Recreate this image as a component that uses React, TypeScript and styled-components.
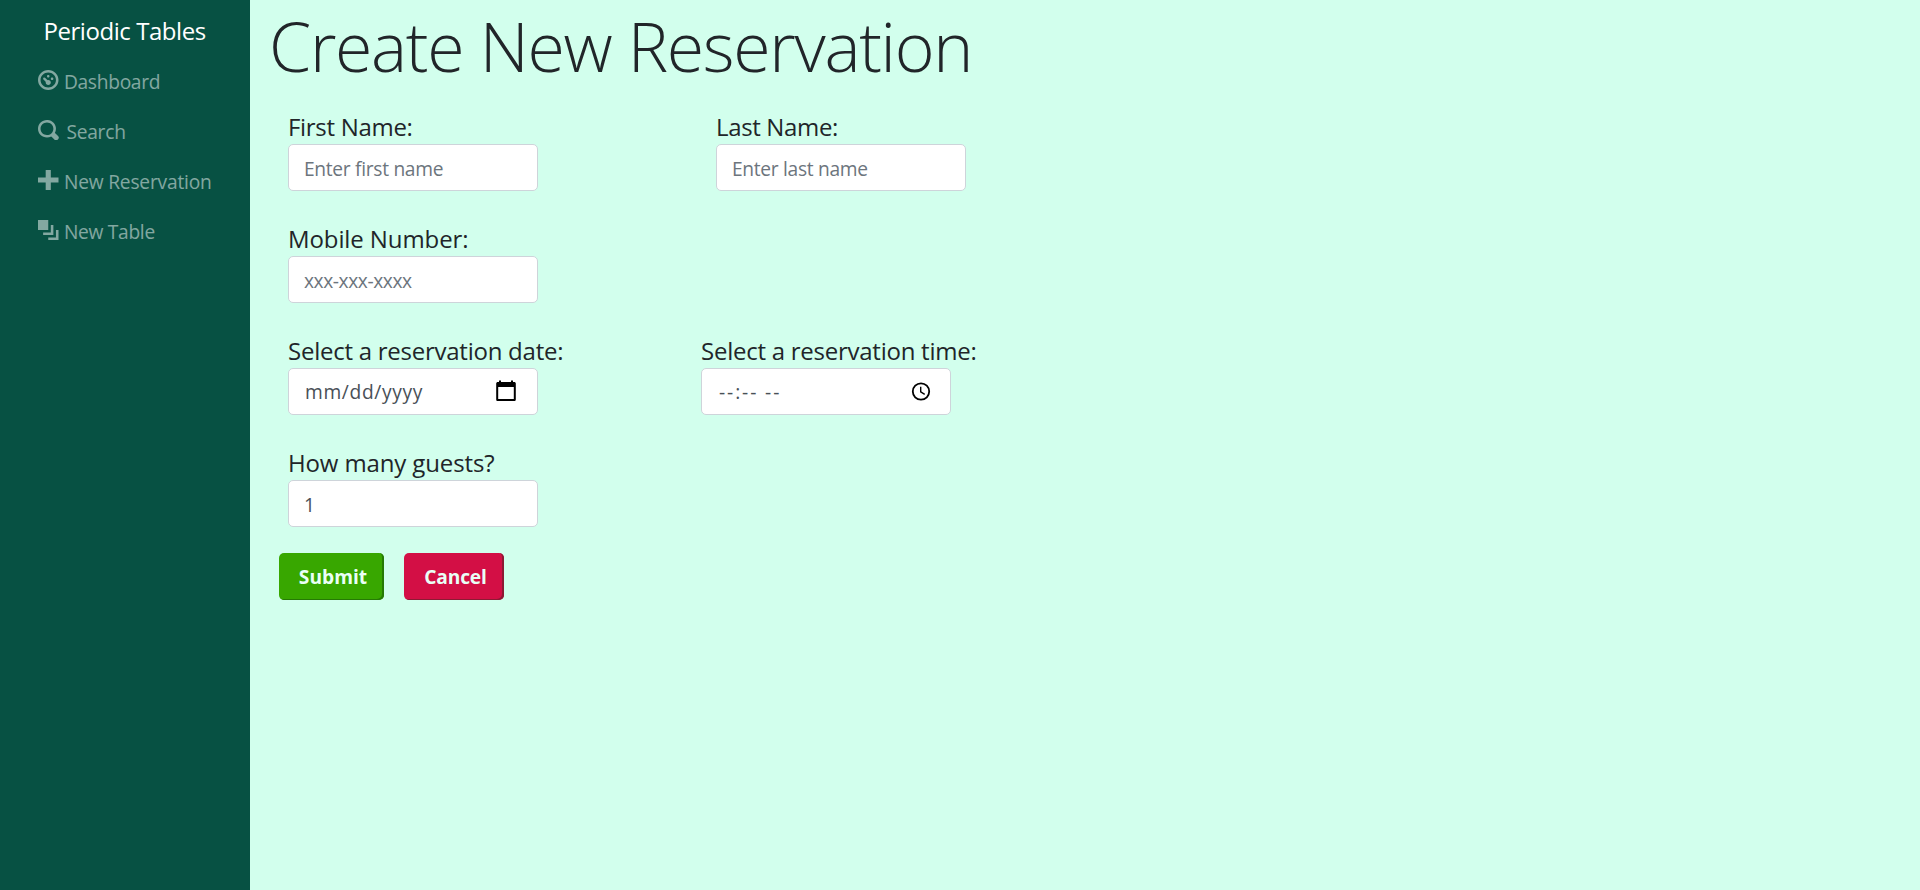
import React from "react";
import styled, { createGlobalStyle } from "styled-components";

const GlobalStyle = createGlobalStyle`
  *, *::before, *::after { box-sizing: border-box; }
  body {
    margin: 0;
    background: #d2ffed;
    color: #212529;
    font-family: "Open Sans", "Noto Sans", sans-serif;
  }
`;

const Layout = styled.div`
  display: flex;
  min-height: 100vh;
`;

const Sidebar = styled.nav`
  flex: 0 0 250px;
  background: #075143;
`;

const Brand = styled.div`
  height: 57px;
  padding: 9px 0 0 43.5px;
  color: #fff;
  font-size: 24px;
  line-height: 44px;
  letter-spacing: -0.45px;
  white-space: nowrap;
`;

const NavList = styled.ul`
  margin: 0;
  padding: 0 0 0 38.4px;
  list-style: none;
`;

const NavItem = styled.li<{ $gap?: number; $tracking: number }>`
  display: flex;
  align-items: center;
  gap: ${(p) => p.$gap ?? 5}px;
  height: 50px;
  color: rgba(255, 255, 255, 0.5);
  font-size: 19.2px;
  letter-spacing: ${(p) => p.$tracking}px;
  white-space: nowrap;
`;

const NavIcon = styled.svg`
  width: 20.5px;
  height: 20px;
  margin-bottom: 4px;
  fill: currentColor;
`;

const NavLabel = styled.span`
  margin-bottom: 2px;
`;

const Main = styled.main`
  flex: 1;
  padding-left: 20px;
`;

const Title = styled.h1`
  height: 107px;
  margin: 0 0 0 -1px;
  font-size: 68px;
  font-weight: 300;
  line-height: 92px;
  letter-spacing: -1.3px;
  white-space: nowrap;
`;

const Row = styled.div`
  display: flex;
  height: 112px;
  padding-left: 18px;
`;

const Field = styled.div<{ $width?: number }>`
  width: ${(p) => p.$width ?? 414}px;
`;

const Label = styled.label<{ $tracking?: number }>`
  display: block;
  height: 37px;
  font-size: 24px;
  line-height: 40px;
  letter-spacing: ${(p) => p.$tracking ?? 0}px;
  white-space: nowrap;
`;

const Control = styled.div`
  display: flex;
  align-items: center;
  width: 250px;
  height: 47px;
  padding: 0 15px;
  background: #fff;
  border: 1px solid #ced4da;
  border-radius: 5px;
`;

const Input = styled.input<{ $tracking?: number; $inset?: number }>`
  flex: 1;
  min-width: 0;
  height: 30px;
  margin-top: 2px;
  padding: 0 0 0 ${(p) => p.$inset ?? 0}px;
  background: transparent;
  border: 0;
  outline: 0;
  color: #495057;
  font-family: inherit;
  font-size: 19.2px;
  letter-spacing: ${(p) => p.$tracking ?? 0}px;

  &::placeholder {
    color: #6c757d;
    opacity: 1;
  }
`;

const PickerInput = styled(Input)`
  margin-top: 0;
  &::placeholder {
    color: #495057;
  }
`;

const PickerIcon = styled.svg<{ $right: number }>`
  flex: none;
  width: 22px;
  height: 22px;
  margin-right: ${(p) => p.$right}px;
  margin-bottom: 1px;
`;

const Actions = styled.div`
  display: flex;
  gap: 20px;
  margin-top: -2px;
  padding-left: 9px;
`;

const Button = styled.button<{ $bg: string; $edge: string; $width: number; $tracking?: number }>`
  width: ${(p) => p.$width}px;
  height: 47px;
  padding: 0 0 0 3px;
  background: ${(p) => p.$bg};
  border: 0;
  border-radius: 5px;
  box-shadow: inset -2px -1px 0 ${(p) => p.$edge};
  color: #e9fff6;
  font-family: inherit;
  font-size: 19.2px;
  font-weight: 700;
  letter-spacing: ${(p) => p.$tracking ?? 0}px;
`;

const navItems = [
  {
    label: "Dashboard",
    tracking: -0.3,
    path: "M4 0c-2.2 0-4 1.8-4 4s1.8 4 4 4 4-1.8 4-4-1.8-4-4-4zm0 1c1.66 0 3 1.34 3 3s-1.34 3-3 3-3-1.34-3-3 1.34-3 3-3zm0 1c-.28 0-.5.22-.5.5s.22.5.5.5.5-.22.5-.5-.22-.5-.5-.5zm-1.66 1a.5.5 0 0 0-.19.84l.91.91c-.02.08-.06.16-.06.25 0 .55.45 1 1 1s1-.45 1-1-.45-1-1-1c-.09 0-.17.04-.25.06l-.91-.91a.5.5 0 0 0-.44-.16.5.5 0 0 0-.06 0zm3.16 0c-.28 0-.5.22-.5.5s.22.5.5.5.5-.22.5-.5-.22-.5-.5-.5z",
  },
  {
    label: "Search",
    tracking: -0.25,
    gap: 7.5,
    path: "M3.5 0c-1.93 0-3.5 1.57-3.5 3.5s1.57 3.5 3.5 3.5c.59 0 1.17-.14 1.66-.41a1 1 0 0 0 .13.13l1 1a1.02 1.02 0 1 0 1.44-1.44l-1-1a1 1 0 0 0-.16-.13c.27-.49.44-1.06.44-1.66 0-1.93-1.55-3.5-3.5-3.5zm0 1c1.39 0 2.5 1.11 2.5 2.5 0 .66-.24 1.27-.66 1.72-.01.01-.02.02-.03.03a1 1 0 0 0-.13.13c-.44.4-1.04.63-1.69.63-1.39 0-2.5-1.11-2.5-2.5s1.11-2.5 2.5-2.5z",
  },
  { label: "New Reservation", tracking: -0.2, path: "M3 0v3h-3v2h3v3h2v-3h3v-2h-3v-3h-2z" },
  {
    label: "New Table",
    tracking: -0.3,
    path: "M0 0v4h4v-4h-4zm5 2v3h-3v1h4v-4h-1zm2 2v3h-3v1h4v-4h-1z",
  },
];

export default function App() {
  return (
    <>
      <GlobalStyle />
      <Layout>
        <Sidebar>
          <Brand>Periodic Tables</Brand>
          <NavList>
            {navItems.map((item) => (
              <NavItem key={item.label} $gap={item.gap} $tracking={item.tracking}>
                <NavIcon viewBox="0 0 8 8" preserveAspectRatio="none">
                  <path d={item.path} />
                </NavIcon>
                <NavLabel>{item.label}</NavLabel>
              </NavItem>
            ))}
          </NavList>
        </Sidebar>
        <Main>
          <Title>Create New Reservation</Title>
          <Row>
            <Field $width={428}>
              <Label htmlFor="first" $tracking={-0.3}>First Name:</Label>
              <Control>
                <Input id="first" placeholder="Enter first name" $tracking={-0.3} />
              </Control>
            </Field>
            <Field>
              <Label htmlFor="last" $tracking={-0.35}>Last Name:</Label>
              <Control>
                <Input id="last" placeholder="Enter last name" $tracking={-0.3} />
              </Control>
            </Field>
          </Row>
          <Row>
            <Field>
              <Label htmlFor="mobile" $tracking={-0.1}>Mobile Number:</Label>
              <Control>
                <Input id="mobile" placeholder="xxx-xxx-xxxx" $tracking={-0.42} />
              </Control>
            </Field>
          </Row>
          <Row>
            <Field $width={413}>
              <Label htmlFor="date" $tracking={-0.25}>Select a reservation date:</Label>
              <Control>
                <PickerInput id="date" placeholder="mm/dd/yyyy" $tracking={0.65} $inset={1} />
                <PickerIcon $right={5} viewBox="0 0 22 22">
                  <path
                    fillRule="evenodd"
                    d="M4 .5h2V2h10V.5h2V2h1.2c1 0 1.6.7 1.6 1.6v15.8c0 1-.7 1.6-1.6 1.6H2.8c-1 0-1.6-.7-1.6-1.6V3.6C1.2 2.7 1.900 2 2.8 2H4zM3.2 7v12h15.6V7z"
                  />
                </PickerIcon>
              </Control>
            </Field>
            <Field>
              <Label htmlFor="time" $tracking={-0.25}>Select a reservation time:</Label>
              <Control>
                <PickerInput id="time" placeholder="--:-- --" $tracking={1.9} $inset={2} />
                <PickerIcon $right={3} viewBox="0 0 22 22" fill="none" stroke="#000">
                  <circle cx="11" cy="11.5" r="8.2" strokeWidth="1.8" />
                  <path d="M10.7 6.7v5.2l4 2.5" strokeWidth="1.4" />
                </PickerIcon>
              </Control>
            </Field>
          </Row>
          <Row>
            <Field>
              <Label htmlFor="guests" $tracking={-0.13}>How many guests?</Label>
              <Control>
                <Input id="guests" defaultValue="1" />
              </Control>
            </Field>
          </Row>
          <Actions>
            <Button $bg="#38a700" $edge="#267a05" $width={105}>Submit</Button>
            <Button $bg="#d30f45" $edge="#8c1a34" $width={100} $tracking={-0.2}>Cancel</Button>
          </Actions>
        </Main>
      </Layout>
    </>
  );
}
